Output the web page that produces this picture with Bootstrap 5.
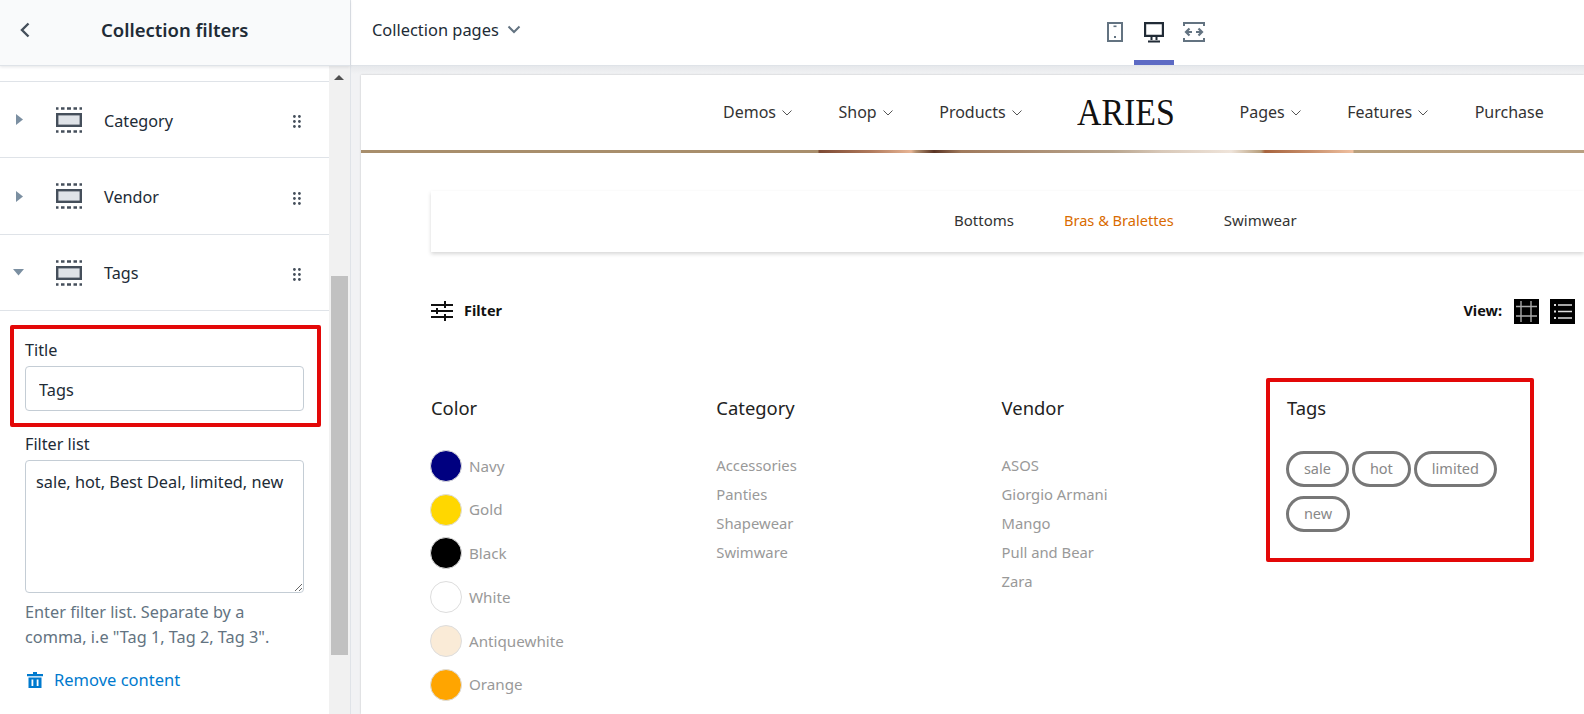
<!DOCTYPE html>
<html lang="en">
<head>
    <meta charset="UTF-8">
    <title>Collection filters</title>
    <link rel="stylesheet" href="https://cdn.jsdelivr.net/npm/bootstrap@5.3.0/dist/css/bootstrap.min.css">
    <style>
        html, body { height: 100%; overflow: hidden; }
        body { font-family: "Noto Sans", sans-serif; font-size: 16px; color: #212b36; background: #fff; }
        .app-shell { height: 714px; }

        /* left panel */
        .side-panel { width: 351px; flex: none; border-right: 1px solid #dfe3e8; }
        .side-head { height: 66px; background: #f9fafb; border-bottom: 1px solid #dfe3e8; box-shadow: 0 1px 3px rgba(33,43,54,.12); position: relative; z-index: 2; padding-bottom: 5px; }
        .side-head .back-btn { width: 50px; }
        .side-title { font-size: 18.5px; font-weight: 600; margin-left: 51px; }
        .side-body { height: 648px; }
        .side-scroll { width: 329px; flex: none; padding-top: 15px; }
        .block-row { height: 76.33px; border-top: 1px solid #dfe3e8; padding: 1px 28px 0 16px; }
        .block-row .row-label { margin-left: 22px; font-size: 16.2px; padding-top: 1px; }
        .row-caret { width: 32px; flex: none; margin-top: -4px; }
        .caret-open { margin-left: -3px; }
        .row-grip { margin-left: auto; }
        .field-area { position: relative; border-top: 1px solid #dfe3e8; padding: 0 25px; }
        .field-label { font-size: 16.2px; line-height: 22px; margin-bottom: 5px; }
        .label-first { margin-top: 28px; }
        .label-next { margin-top: 22px; }
        .field-input { height: 45px; border: 1px solid #c4cdd5; border-radius: 4px; font-size: 16.3px; padding: 3px 13px 0; color: #212b36; }
        .field-area textarea.field-input { height: 133px; padding: 9px 10px; line-height: 24px; }
        .field-input:focus { box-shadow: none; border-color: #c4cdd5; }
        .field-help { color: #637381; font-size: 16.3px; line-height: 25px; margin-top: 7px; }
        .remove-link { color: #007ace; text-decoration: none; font-size: 16.5px; margin-top: 18px; gap: 9px; }
        .mark-box { position: absolute; border: 4px solid #e30808; border-radius: 2px; pointer-events: none; }
        .mark-title { left: 10px; top: 14px; width: 311px; height: 102px; }

        .fake-scroll { width: 21px; flex: none; background: #f1f1f1; position: relative; }
        .scroll-up { width: 0; height: 0; border-left: 5px solid transparent; border-right: 5px solid transparent; border-bottom: 5px solid #505050; position: absolute; left: 5px; top: 9px; }
        .scroll-thumb { position: absolute; left: 2px; top: 210px; width: 17px; height: 379px; background: #c1c1c1; }

        /* top bar and preview */
        .main-col { min-width: 0; }
        .top-bar { height: 66px; border-bottom: 1px solid #dfe3e8; }
        .page-pick { margin-left: 21px; font-size: 16.4px; width: 723px; padding-bottom: 5px; }
        .view-tab { width: 39px; height: 65px; display: flex; justify-content: center; padding-top: 21px; }
        .view-tab.is-on { width: 40px; border-bottom: 5px solid #5c6ac4; }
        .preview-wrap { background: linear-gradient(#e6e8eb, #f1f2f4 8px); padding: 9px 0 0 10px; height: 648px; overflow: hidden; }
        .store-page { background: #fff; height: 100%; box-shadow: 0 0 2px rgba(0,0,0,.2); color: #333; }

        .store-nav { height: 75px; padding: 0 0 2px 362px; }
        .store-link { font-size: 16px; color: #333; white-space: nowrap; }
        .store-link + .store-link { margin-left: 46.5px; }
        .store-logo { font-family: "Liberation Serif", serif; font-size: 38px; color: #111; line-height: 1; display: inline-block; transform: scaleX(.89); transform-origin: left center; margin: 0 -14px 0 55px; }
        .store-logo + .store-link { margin-left: 67px; }
        .nav-chev { margin-left: 6px; }
        .photo-strip { height: 3px; background: linear-gradient(90deg, #a88e6c 0, #a88e6c 457px, #7d4a34 458px, #b07a5c 510px, #e8b595 550px, #b39070 555px, #5a3424 573px, #a07a5c 600px, #b8a58e 752px, #d8c8b8 800px, #efe4da 870px, #b8a07e 900px, #a8643e 904px, #c8906c 950px, #f0c0a0 992px, #b8a07e 993px, #b79f80 1223px); }

        .sub-cats { height: 61px; margin: 38px 0 0 70px; box-shadow: 0 2px 4px rgba(0,0,0,.16); padding: 0 0 2px 523px; gap: 50px; font-size: 15px; }
        .sub-cats .is-current { color: #d96b00; font-size: 14.6px; }
        .tool-row { margin: 48px 9px 0 70px; height: 22px; }
        .tool-label { font-size: 14.5px; font-weight: 700; color: #111; }
        .filter-label { margin-left: 11px; }
        .view-next { margin-left: 11px; }
        .filter-cols { display: grid; grid-template-columns: repeat(4, 285.3px); margin: 74px 0 0 70px; }
        .filter-col { position: relative; }
        .col-title { font-size: 18.4px; color: #222; line-height: 24px; margin-bottom: 31px; }
        .swatch-row { height: 43.8px; font-size: 15.2px; color: #999; gap: 7px; margin-left: -1px; }
        .swatch { width: 32px; height: 32px; border-radius: 50%; border: 1px solid #ddd; flex: none; }
        .plain-item { font-size: 14.8px; color: #999; line-height: 29px; }
        .filter-cols .first-list { margin-top: -7px; }
        .tag-wrap { gap: 9px 3px; width: 240px; margin: 2px 0 0 -1px; }
        .tag-pill { border: 3px solid #777; border-radius: 18px; height: 36px; padding: 0 15px; font-size: 14.5px; color: #888; display: flex; align-items: center; }
        .mark-tags { left: -21px; top: -18px; width: 268px; height: 184px; }
    </style>
</head>
<body>
<div class="app-shell d-flex">
    <div class="side-panel d-flex flex-column">
        <div class="side-head d-flex align-items-center">
            <div class="back-btn d-flex justify-content-center">
                <svg width="14" height="18" viewBox="0 0 14 18"><path d="M10.500 2.500 4 9l6.500 6.500" fill="none" stroke="#454f5b" stroke-width="2.400"/></svg>
            </div>
            <div class="side-title">Collection filters</div>
        </div>
        <div class="side-body d-flex">
            <div class="side-scroll">
                <div class="block-row d-flex align-items-center">
                    <span class="row-caret"><svg width="8" height="11" viewBox="0 0 8 11"><path d="M0 0l7 5.500L0 11z" fill="#7b8fa1"/></svg></span>
                    <svg width="26" height="26" viewBox="0 0 26 26" class="ms-2"><use href="#blockIcon"/></svg>
                    <span class="row-label">Category</span>
                    <span class="row-grip"><svg width="8" height="13" viewBox="0 0 8 13"><use href="#gripIcon"/></svg></span>
                </div>
                <div class="block-row d-flex align-items-center">
                    <span class="row-caret"><svg width="8" height="11" viewBox="0 0 8 11"><path d="M0 0l7 5.500L0 11z" fill="#7b8fa1"/></svg></span>
                    <svg width="26" height="26" viewBox="0 0 26 26" class="ms-2"><use href="#blockIcon"/></svg>
                    <span class="row-label">Vendor</span>
                    <span class="row-grip"><svg width="8" height="13" viewBox="0 0 8 13"><use href="#gripIcon"/></svg></span>
                </div>
                <div class="block-row d-flex align-items-center">
                    <span class="row-caret"><svg width="12" height="7" viewBox="0 0 12 7" class="caret-open"><path d="M0 0h11L5.500 6.500z" fill="#7b8fa1"/></svg></span>
                    <svg width="26" height="26" viewBox="0 0 26 26" class="ms-2"><use href="#blockIcon"/></svg>
                    <span class="row-label">Tags</span>
                    <span class="row-grip"><svg width="8" height="13" viewBox="0 0 8 13"><use href="#gripIcon"/></svg></span>
                </div>
                <div class="field-area">
                    <div class="mark-box mark-title"></div>
                    <div class="field-label label-first">Title</div>
                    <input class="form-control field-input" value="Tags">
                    <div class="field-label label-next">Filter list</div>
                    <textarea class="form-control field-input">sale, hot, Best Deal, limited, new</textarea>
                    <div class="field-help">Enter filter list. Separate by a comma, i.e "Tag 1, Tag 2, Tag 3".</div>
                    <a href="#" class="remove-link d-flex align-items-center">
                        <svg width="20" height="20" viewBox="0 0 20 20"><path d="M8 2h4v2h6v2.200H2V4h6zM3.500 7.500h13V18h-13zM6.500 9.500v6.500h1.800V9.500zm5.200 0v6.500h1.800V9.500z" fill="#007ace" fill-rule="evenodd"/></svg>
                        Remove content
                    </a>
                </div>
            </div>
            <div class="fake-scroll">
                <div class="scroll-up"></div>
                <div class="scroll-thumb"></div>
            </div>
        </div>
    </div>

    <div class="main-col flex-grow-1 d-flex flex-column">
        <div class="top-bar d-flex">
            <div class="page-pick d-flex align-items-center gap-2">
                <span>Collection pages</span>
                <svg width="14" height="10" viewBox="0 0 14 10"><path d="M1.500 1.500 7 7l5.500-5.500" fill="none" stroke="#637381" stroke-width="2"/></svg>
            </div>
            <div class="d-flex">
                <div class="view-tab">
                    <svg width="22" height="22" viewBox="0 0 22 22"><rect x="4" y="2" width="14" height="18" fill="none" stroke="#637381" stroke-width="2"/><rect x="9.500" y="4.500" width="3" height="1.600" fill="#637381"/><rect x="10" y="15" width="2" height="2" fill="#637381"/></svg>
                </div>
                <div class="view-tab is-on">
                    <svg width="22" height="22" viewBox="0 0 22 22"><path d="M1 1h20v15H1zM3.200 3.200v10.600h15.600V3.200zM5 19.500h12V21.500H5zM7.500 16h2v4h-2zm5 0h2v4h-2z" fill="#212b36" fill-rule="evenodd"/></svg>
                </div>
                <div class="view-tab">
                    <svg width="22" height="22" viewBox="0 0 22 22"><path d="M1 5V2h20v3M1 17v3h20v-3" fill="none" stroke="#637381" stroke-width="2"/><path d="M3 11h6M13 11h6M6.500 7.500 3 11l3.500 3.500M15.500 7.500 19 11l-3.500 3.500" fill="none" stroke="#637381" stroke-width="2.200"/></svg>
                </div>
            </div>
        </div>
        <div class="preview-wrap">
            <div class="store-page">
                <div class="store-nav d-flex align-items-center">
                    <span class="store-link">Demos<svg class="nav-chev" width="10" height="6" viewBox="0 0 10 6"><path d="M.5.500 5 5 9.500.5" fill="none" stroke="#555"/></svg></span>
                    <span class="store-link">Shop<svg class="nav-chev" width="10" height="6" viewBox="0 0 10 6"><path d="M.5.500 5 5 9.500.5" fill="none" stroke="#555"/></svg></span>
                    <span class="store-link">Products<svg class="nav-chev" width="10" height="6" viewBox="0 0 10 6"><path d="M.5.500 5 5 9.500.5" fill="none" stroke="#555"/></svg></span>
                    <span class="store-logo">ARIES</span>
                    <span class="store-link">Pages<svg class="nav-chev" width="10" height="6" viewBox="0 0 10 6"><path d="M.5.500 5 5 9.500.5" fill="none" stroke="#555"/></svg></span>
                    <span class="store-link">Features<svg class="nav-chev" width="10" height="6" viewBox="0 0 10 6"><path d="M.5.500 5 5 9.500.5" fill="none" stroke="#555"/></svg></span>
                    <span class="store-link">Purchase</span>
                </div>
                <div class="photo-strip"></div>
                <div class="sub-cats d-flex align-items-center">
                    <span>Bottoms</span>
                    <span class="is-current">Bras &amp; Bralettes</span>
                    <span>Swimwear</span>
                </div>
                <div class="tool-row d-flex align-items-center">
                    <svg width="22" height="20" viewBox="0 0 22 20"><path d="M0 4h22M0 10h22M0 16h22" stroke="#111" stroke-width="2" fill="none"/><path d="M14 0v7M6 7v6M14 13v7" stroke="#111" stroke-width="2" fill="none"/></svg>
                    <span class="tool-label filter-label">Filter</span>
                    <span class="tool-label ms-auto me-1">View:</span>
                    <svg width="25" height="25" viewBox="0 0 25 25" class="ms-2"><rect width="25" height="25" fill="#000"/><path d="M2 7.500h21M2 17h21M7 2v21M17 2v21" stroke="#aaa" stroke-width="1.400"/></svg>
                    <svg width="25" height="25" viewBox="0 0 25 25" class="view-next"><rect width="25" height="25" fill="#000"/><path d="M8 6h14M8 12.500h14M8 19h14" stroke="#ddd" stroke-width="1.400"/><path d="M4 5h2v2H4zM4 11.500h2v2H4zM4 18h2v2H4z" fill="#ddd"/></svg>
                </div>
                <div class="filter-cols">
                    <div class="filter-col">
                        <div class="col-title">Color</div>
                        <div class="first-list">
                            <div class="swatch-row d-flex align-items-center"><span class="swatch" style="background:#000080"></span>Navy</div>
                            <div class="swatch-row d-flex align-items-center"><span class="swatch" style="background:#ffd700"></span>Gold</div>
                            <div class="swatch-row d-flex align-items-center"><span class="swatch" style="background:#000"></span>Black</div>
                            <div class="swatch-row d-flex align-items-center"><span class="swatch" style="background:#fff"></span>White</div>
                            <div class="swatch-row d-flex align-items-center"><span class="swatch" style="background:#faebd7"></span>Antiquewhite</div>
                            <div class="swatch-row d-flex align-items-center"><span class="swatch" style="background:#ffa500"></span>Orange</div>
                        </div>
                    </div>
                    <div class="filter-col">
                        <div class="col-title">Category</div>
                        <div class="plain-item">Accessories</div>
                        <div class="plain-item">Panties</div>
                        <div class="plain-item">Shapewear</div>
                        <div class="plain-item">Swimware</div>
                    </div>
                    <div class="filter-col">
                        <div class="col-title">Vendor</div>
                        <div class="plain-item">ASOS</div>
                        <div class="plain-item">Giorgio Armani</div>
                        <div class="plain-item">Mango</div>
                        <div class="plain-item">Pull and Bear</div>
                        <div class="plain-item">Zara</div>
                    </div>
                    <div class="filter-col">
                        <div class="mark-box mark-tags"></div>
                        <div class="col-title">Tags</div>
                        <div class="tag-wrap d-flex flex-wrap">
                            <span class="tag-pill">sale</span>
                            <span class="tag-pill">hot</span>
                            <span class="tag-pill">limited</span>
                            <span class="tag-pill">new</span>
                        </div>
                    </div>
                </div>
            </div>
        </div>
    </div>
</div>

<svg width="0" height="0" class="position-absolute">
    <defs>
        <g id="blockIcon">
            <path d="M0 1.500h2.500M5 1.500h3.500M11 1.500h4M17.500 1.500h3.500M23.500 1.500h2.500M0 24.500h2.500M5 24.500h3.500M11 24.500h4M17.500 24.500h3.500M23.500 24.500h2.500" stroke="#454f5b" stroke-width="2.400" fill="none"/>
            <rect x="1.200" y="7.200" width="23.600" height="11.600" fill="#dfe3e8" stroke="#454f5b" stroke-width="2.400"/>
        </g>
        <g id="gripIcon" fill="#454f5b">
            <circle cx="1.400" cy="1.500" r="1.400"/><circle cx="6.400" cy="1.500" r="1.400"/>
            <circle cx="1.400" cy="6.500" r="1.400"/><circle cx="6.400" cy="6.500" r="1.400"/>
            <circle cx="1.400" cy="11.500" r="1.400"/><circle cx="6.400" cy="11.500" r="1.400"/>
        </g>
    </defs>
</svg>
<script src="https://cdn.jsdelivr.net/npm/bootstrap@5.3.0/dist/js/bootstrap.bundle.min.js"></script>
</body>
</html>
